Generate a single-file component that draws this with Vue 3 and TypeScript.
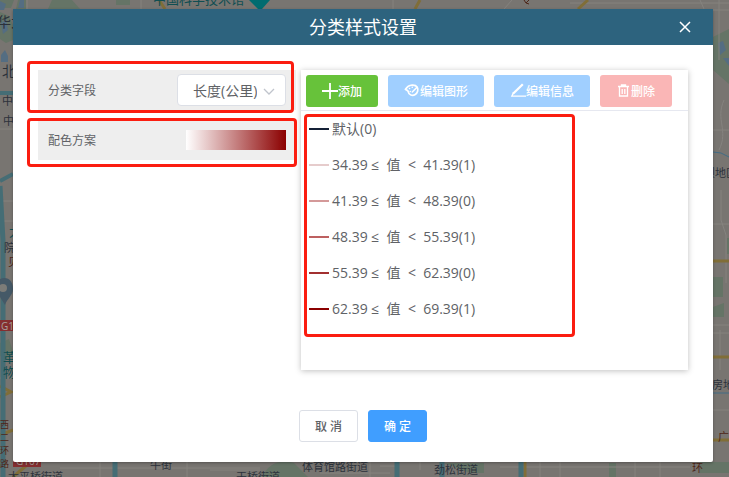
<script setup lang="ts">
import { ref } from 'vue'

interface LegendItem {
  label: string
  color: string
}

const field = ref('length')

function rangeLabel(from: number, to: number, count: number): string {
  return `${from} ≤  值  <  ${to}(${count})`
}

const items: LegendItem[] = [
  { label: '默认(0)', color: '#142036' },
  { label: rangeLabel(34.39, 41.39, 1), color: '#e6cccc' },
  { label: rangeLabel(41.39, 48.39, 0), color: '#d49999' },
  { label: rangeLabel(48.39, 55.39, 1), color: '#bd6060' },
  { label: rangeLabel(55.39, 62.39, 0), color: '#a23030' },
  { label: rangeLabel(62.39, 69.39, 1), color: '#8b0000' },
]
</script>

<template>
  <div class="page">
    <svg class="map" viewBox="0 0 729 477" preserveAspectRatio="xMidYMid slice" aria-hidden="true">
      <rect width="729" height="477" fill="#787571" />
      <g fill="#657466">
        <path d="M0 0h14l-3 8H0zM18 0h8v9H16zM0 12l9 4 4 9v15l-7 3-6-4zM729 29v55l-16-14V37zM713 277h10v20h-10zM713 307l11-4v14h-11zM0 343l9-4 4 13-5 7-8-3zM262 477c6-12 17-19 32-14l14 14zM52 0h20l8 9H48zM700 462h29v11h-29zM609 463h7v14h-7zM727 238h2v16h-2zM116 0h14v5h-14zM444 463h40v10h-14z" />
      </g>
      <g fill="#546d82">
        <path d="M0 1l6 3-2 6H0zM20 0h4v8h-6zM1 23l5-4 2 11-5 4zM1 55l4-5 3 6v6H1zM718 43l5-2 3 9-6 5zM723 58h6v8z" />
      </g>
      <g fill="none" stroke="#85837f" stroke-width="1">
        <path d="M27 0v9M141 0v9M393 0v9M512 0l-8 9M570 3h159M700 0l4 9M713 10h16M719 0v60M713 130h16M724 100c-9 20 5 30-5 50M721 190v30l5 15v48M713 224h16M713 325h16M713 333h16M0 129h13M0 201h13M0 221h13M0 378h13M720 330v40M713 410h16M60 468h200M100 462v15M187 462v15M210 470h50M320 473h70M370 462v15M380 466h15M500 467h190M540 462v15M560 462v15M635 462v15M660 462v15M420 462v8" />
      </g>
      <g fill="none" stroke="#806e38" stroke-width="3">
        <path d="M159 0l6 9M420 0l-5 9M588 0l-10 9M713 261h16M713 357h16M713 440h16M13 477l14-12M0 386l11 6-11 5M525 462v15M0 435l13-5" />
      </g>
      <g fill="none" stroke="#456d75">
        <path d="M0 93h13M0 181l13-7" stroke-width="4" />
        <path d="M0 186l3 55v236" stroke-width="5" />
        <path d="M115 462v15M397 462v15M442 462v15M521 462v15" stroke-width="5" />
        <path d="M713 152l8 1 8 4M713 393h16" stroke="#426c85" stroke-width="1" />
      </g>
      <path d="M249 0h21l-8 9h-4z" fill="#006c70" />
      <path d="M0 279c8-3 13 2 13 10 0 6-6 10-8 16l-5-8z" fill="#455967" />
      <circle cx="3" cy="288" r="4" fill="#7c7c78" />
      <path d="M0 320h13v11H0zM13 460h28v7H13z" fill="#852e30" />
      <path d="M524 0l2 3M529 0l-3 3 3 1" fill="none" stroke="#4e2618" />
      <g class="map-labels">
        <text x="153" y="4" class="teal large">中国科学技术馆</text>
        <text x="-3" y="27" class="large">华大</text>
        <text x="2" y="76" class="large">北</text>
        <text x="2" y="105">中</text>
        <text x="3" y="125">中</text>
        <text x="9" y="236" class="teal large">大</text>
        <text x="4" y="252">院</text>
        <text x="8" y="266" class="brown">见</text>
        <text x="1" y="330" class="route">G1</text>
        <text x="3" y="362" class="teal large">革</text>
        <text x="3" y="377" class="teal large">物</text>
        <text x="16" y="465" class="route">G107</text>
        <text x="0" y="428" class="brown small">西</text>
        <text x="0" y="441" class="brown small">二</text>
        <text x="0" y="454" class="brown small">环</text>
        <text x="0" y="467" class="brown small">路</text>
        <text x="704" y="177">坝地区</text>
        <text x="712" y="389">房地区</text>
        <text x="718" y="441" class="brown">广</text>
        <text x="692" y="472" class="brown">环</text>
        <text x="150" y="469">牛街</text>
        <text x="302" y="471">体育馆路街道</text>
        <text x="434" y="474">劲松街道</text>
        <text x="8" y="481">太平桥街道</text>
        <text x="236" y="481">天桥街道</text>
      </g>
    </svg>

    <section class="dialog" role="dialog" aria-labelledby="dialog-title">
      <header class="dialog-header">
        <h1 id="dialog-title">分类样式设置</h1>
        <button class="close" type="button" aria-label="关闭">
          <svg viewBox="0 0 12 12" width="12" height="12"><path d="M1 1l10 10M11 1L1 11" /></svg>
        </button>
      </header>

      <div class="dialog-body">
        <form class="settings" @submit.prevent>
          <div class="setting">
            <label for="field">分类字段</label>
            <div class="select">
              <select id="field" v-model="field">
                <option value="length">长度(公里)</option>
              </select>
              <svg class="chevron" viewBox="0 0 12 8" width="12" height="8"><path d="M1 1l5 5 5-5" /></svg>
            </div>
            <span class="mark mark-field"></span>
          </div>
          <div class="setting">
            <label for="ramp">配色方案</label>
            <button id="ramp" class="ramp" type="button"></button>
            <span class="mark mark-ramp"></span>
          </div>
        </form>

        <div class="panel">
          <div class="toolbar">
            <button class="tool add" type="button">
              <svg viewBox="0 0 16 16" width="16" height="16"><path d="M8 0v16M0 8h16" stroke-width="1.8" /></svg>添加
            </button>
            <button class="tool edit" type="button" disabled>
              <svg viewBox="0 0 16 16" width="16" height="16">
                <path d="M13.2 4.200C11.500 1.500 5 .8 1.500 6.300c1.200 1.200 2.500.6 2.800 2.600.4 3.200 4.200 4.300 6.900 2.600 2.400-1.500 3.400-4.700 2-7.300z" stroke-width="1.7" />
                <path d="M13 4.200L8.300 9M5.500 5.400h.1M8.200 4.300h.1M6.200 8.400h.1" stroke-width="1.500" stroke-linecap="round" />
              </svg>编辑图形
            </button>
            <button class="tool edit" type="button" disabled>
              <svg viewBox="0 0 16 16" width="16" height="16"><path d="M3.500 9.500L1.800 13.200H16" stroke-width="1.3" /><path d="M12.800 1.200L3 10.800" stroke-width="2.200" /></svg>编辑信息
            </button>
            <button class="tool remove" type="button" disabled>
              <svg viewBox="0 0 14 14" width="14" height="14"><path d="M1 2.500h11M4.500 2.500V1h4v1.500M2.500 2.500V12h8V2.500M5.200 5v5M7.800 5v5" stroke-width="1.300" /></svg>删除
            </button>
          </div>
          <ul class="legend">
            <li v-for="item in items" :key="item.label">
              <span class="line" :style="{ background: item.color }"></span>
              <span class="label">{{ item.label }}</span>
            </li>
            <li class="mark mark-legend" aria-hidden="true"></li>
          </ul>
        </div>
      </div>

      <footer class="dialog-footer">
        <button class="action" type="button">取 消</button>
        <button class="action primary" type="button">确 定</button>
      </footer>
    </section>
  </div>
</template>

<style>
body {
  background: #787571;
}
</style>

<style scoped>
.page {
  position: relative;
  box-sizing: border-box;
  min-height: 100vh;
  padding: 9px 16px 15px 13px;
  overflow: hidden;
  font-family: 'Open Sans', 'Noto Sans CJK SC', sans-serif;
  color: #606266;
}

.page button,
.page select {
  font-family: inherit;
  margin: 0;
}

.map {
  position: absolute;
  inset: 0;
  width: 100%;
  height: 100%;
}

.map-labels {
  font-size: 11px;
  fill: #2c323b;
}

.map-labels .large {
  font-size: 14px;
}

.map-labels .small {
  font-size: 9px;
}

.map-labels .teal {
  fill: #104e52;
}

.map-labels .teal.large {
  font-size: 13px;
}

.map-labels .brown {
  fill: #4e2618;
}

.map-labels .route {
  font-size: 10px;
  fill: #a9a19e;
}

.dialog {
  position: relative;
  background: #fff;
  border-radius: 2px;
  box-shadow: 0 1px 3px rgba(0, 0, 0, 0.3);
}

.dialog-header {
  display: grid;
  grid-template-columns: 36px 1fr 36px;
  align-items: center;
  height: 36px;
  padding: 0 10px;
  background: #2d637e;
  color: #fff;
}

.dialog-header h1 {
  grid-column: 2;
  margin: 0;
  text-align: center;
  font-size: 18px;
  line-height: 36px;
  font-weight: 400;
}

.close {
  display: grid;
  place-items: center;
  height: 36px;
  padding: 0;
  border: 0;
  background: none;
}

.close svg,
.chevron,
.tool svg {
  fill: none;
  stroke: #fff;
}

.close svg {
  stroke-width: 1.5;
}

.dialog-body {
  display: grid;
  grid-template-columns: 2fr 3fr;
  gap: 5px;
  padding: 25px 25px 0;
}

.settings {
  display: flex;
  flex-direction: column;
  gap: 10px;
}

.setting {
  position: relative;
  box-sizing: border-box;
  display: flex;
  align-items: center;
  justify-content: space-between;
  height: 40px;
  padding: 0 10px;
  background: #eee;
}

.setting label {
  font-size: 12px;
}

.select {
  position: relative;
  width: 109px;
}

.select select {
  display: block;
  box-sizing: border-box;
  width: 100%;
  height: 32px;
  padding: 0 28px 0 15px;
  border: 1px solid #dcdfe6;
  border-radius: 4px;
  appearance: none;
  background: #fff;
  color: #606266;
  font-size: 14px;
}

.chevron {
  position: absolute;
  right: 11px;
  top: 14px;
  stroke: #c0c4cc;
  stroke-width: 1.3;
  pointer-events: none;
}

.ramp {
  width: 100px;
  height: 20px;
  padding: 0;
  border: 0;
  background: linear-gradient(to right, #fff, #8b0000);
}

.mark {
  position: absolute;
  box-sizing: border-box;
  border: 3px solid #fb1d10;
  border-radius: 4px;
  pointer-events: none;
}

.mark-field {
  inset: -9px 2px -3px -11px;
}

.mark-ramp {
  inset: -2px -1px -7px -11px;
}

.panel {
  min-height: 300px;
  background: #fff;
  box-shadow: 0 1px 6px rgba(0, 0, 0, 0.25);
}

.toolbar {
  display: flex;
  gap: 10px;
  padding: 5px 5px 3px;
  border-bottom: 1px solid #e6e8f0;
}

.tool {
  display: flex;
  align-items: center;
  justify-content: center;
  box-sizing: border-box;
  width: 72px;
  height: 32px;
  padding: 0;
  border: 0;
  border-radius: 3px;
  color: #fff;
  font-size: 12px;
  font-weight: 500;
  white-space: nowrap;
}

.add {
  background: #67c23a;
}

.edit {
  width: 96px;
  background: #a0cfff;
}

.remove {
  background: #fab6b6;
}

.legend {
  position: relative;
  margin: 0;
  padding: 0 8px;
  list-style: none;
  font-size: 14px;
}

.legend li:not(.mark) {
  display: flex;
  align-items: center;
  gap: 3px;
  height: 36px;
}

.label {
  padding-bottom: 2px;
  white-space: pre;
}

.line {
  width: 20px;
  height: 2px;
}

.mark-legend {
  inset: 3px auto -10px 3px;
  width: 70%;
}

.dialog-footer {
  display: flex;
  justify-content: center;
  gap: 10px;
  padding: 40px 0 20px;
}

.action {
  box-sizing: border-box;
  width: 59px;
  height: 32px;
  padding: 0;
  border: 1px solid #dcdfe6;
  border-radius: 3px;
  background: #fff;
  color: #606266;
  font-size: 12px;
  font-weight: 500;
}

.primary {
  border-color: #409eff;
  background: #409eff;
  color: #fff;
}
</style>
